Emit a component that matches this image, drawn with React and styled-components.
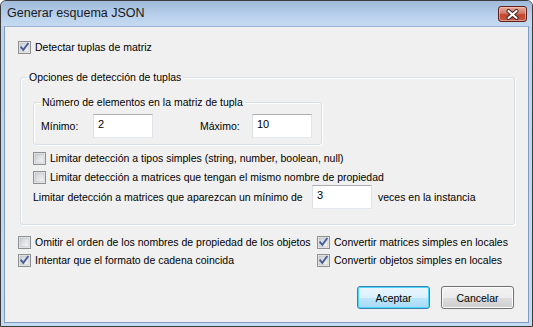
import React from "react";
import styled, { createGlobalStyle } from "styled-components";

const Global = createGlobalStyle`
  html, body { margin: 0; padding: 0; background: #ffffff; }
  body { font-family: "Liberation Sans", Arial, sans-serif; font-size: 10.5px; color: #000; }
  * { box-sizing: border-box; }
`;

const Window = styled.div`
  width: 533px;
  height: 327px;
  border: 1px solid #3c3c3c;
  border-radius: 6px 6px 0 0;
  background: linear-gradient(#a2bcdc, #bfd5ee 30px, #c3daf2);
  display: flex;
  flex-direction: column;
  overflow: hidden;
`;

const TitleBar = styled.div`
  height: 25px;
  flex: none;
  display: flex;
  align-items: center;
  justify-content: space-between;
  padding: 0 5px 2px 6px;
  background: linear-gradient(#9fb9da, #b9d1ec 60%, #c5daf1);
`;

const Title = styled.span`
  font-family: "Liberation Sans", Arial, sans-serif;
  font-size: 12.5px;
  color: #1a1a1a;
`;

const CloseButton = styled.div`
  width: 29px;
  height: 16px;
  margin-top: 3px;
  border: 1px solid #5d1f17;
  border-radius: 3px;
  background: linear-gradient(#e6a89c, #d3786a 45%, #c0452f 55%, #c85a44);
  box-shadow: inset 0 0 0 1px rgba(255, 210, 200, 0.55);
  display: flex;
  align-items: center;
  justify-content: center;
`;

const Body = styled.div`
  flex: 1;
  margin: 0 3px 3px 3px;
  border: 1px solid #7f9bbd;
  border-top-color: #9ab3d2;
  background: #f0f0f0;
  padding: 12px 13px 0 13px;
  display: flex;
  flex-direction: column;
`;

const Row = styled.div`
  display: flex;
  align-items: center;
  gap: ${(p) => p.$gap ?? 4}px;
  height: ${(p) => p.$h ?? 16}px;
  margin-top: ${(p) => p.$mt ?? 0}px;
  white-space: nowrap;
`;

const Group = styled.fieldset`
  margin: ${(p) => p.$m};
  padding: 0;
  border: 1px solid #d5dfe5;
  border-radius: 3px;
  box-shadow: inset 1px 1px 0 #ffffff, 1px 1px 0 #ffffff;
  min-width: 0;
`;

const Legend = styled.legend`
  margin-left: 6px;
  padding: 0 2px;
  height: 14px;
  line-height: 14px;
  font-size: 10.5px;
`;

const GroupInner = styled.div`
  padding: ${(p) => p.$p};
  display: flex;
  flex-direction: column;
`;

const FieldLabel = styled.span`
  width: ${(p) => p.$w}px;
  flex: none;
  margin-left: ${(p) => p.$ml ?? 0}px;
`;

const TextBox = styled.div`
  width: 60px;
  height: 24px;
  flex: none;
  background: #fff;
  border: 1px solid;
  border-color: #abadb3 #e2e3ea #e3e9ef #dbdfe6;
  padding: 2px 0 0 4px;
  line-height: 14px;
  font-size: 11px;
`;

const Columns = styled.div`
  display: grid;
  grid-template-columns: 299px auto;
  row-gap: 2px;
  margin-top: 9px;
`;

const Buttons = styled.div`
  display: flex;
  justify-content: flex-end;
  gap: 11px;
  margin-top: 18px;
  padding-right: 1px;
`;

const Button = styled.div`
  width: 73px;
  height: 23px;
  border-radius: 3px;
  display: flex;
  align-items: center;
  justify-content: center;
  font-size: 10.5px;
  border: 1px solid ${(p) => (p.$default ? "#3c7fb1" : "#707070")};
  background: ${(p) =>
    p.$default
      ? "linear-gradient(#eaf6fd, #d9f0fc 50%, #bee6fd 51%, #a7d9f5)"
      : "linear-gradient(#f2f2f2, #ebebeb 50%, #dddddd 51%, #cfcfcf)"};
  box-shadow: inset 0 0 0 1px ${(p) => (p.$default ? "#48d8fb" : "#fcfcfc")};
`;

const Box = styled.svg`
  flex: none;
  display: block;
`;

function Check({ checked }) {
  return (
    <Box width="13" height="13" viewBox="0 0 13 13">
      <defs>
        <linearGradient id="cbg" x1="0" y1="0" x2="1" y2="1">
          <stop offset="0" stopColor="#cbcfd5" />
          <stop offset="1" stopColor="#f7f7f7" />
        </linearGradient>
      </defs>
      <rect x="0.5" y="0.5" width="12" height="12" fill="#f4f4f4" stroke="#8e8f8f" />
      <rect x="2" y="2" width="9" height="9" fill="url(#cbg)" stroke="#b0b4bb" strokeWidth="0.6" />
      {checked && (
        <path
          d="M3.2 6.4 L5.3 8.9 L9.8 2.8"
          fill="none"
          stroke="#4a5f97"
          strokeWidth="1.9"
          strokeLinecap="square"
          strokeLinejoin="miter"
        />
      )}
    </Box>
  );
}

function CheckRow({ checked, children, mt }) {
  return (
    <Row $mt={mt}>
      <Check checked={checked} />
      <span>{children}</span>
    </Row>
  );
}

export default function App() {
  return (
    <>
      <Global />
      <Window>
        <TitleBar>
          <Title>Generar esquema JSON</Title>
          <CloseButton>
            <svg width="13" height="11" viewBox="0 0 13 11">
              <path d="M2.5 2 L10.5 9 M10.5 2 L2.5 9" stroke="#3a1a16" strokeWidth="4" strokeLinecap="round" />
              <path d="M2.5 2 L10.5 9 M10.5 2 L2.5 9" stroke="#ffffff" strokeWidth="2.2" strokeLinecap="round" />
            </svg>
          </CloseButton>
        </TitleBar>
        <Body>
          <CheckRow checked>Detectar tuplas de matriz</CheckRow>
          <Group $m="15px 0 0 2px">
            <Legend>Opciones de detección de tuplas</Legend>
            <GroupInner $p="11px 12px 15px 12px">
              <Group $m="0 180px 0 0">
                <Legend>Número de elementos en la matriz de tupla</Legend>
                <GroupInner $p="5px 8px 6px 7px">
                  <Row $h={24} $gap={0}>
                    <FieldLabel $w={52}>Mínimo:</FieldLabel>
                    <TextBox>2</TextBox>
                    <FieldLabel $w={52} $ml={47}>Máximo:</FieldLabel>
                    <TextBox>10</TextBox>
                  </Row>
                </GroupInner>
              </Group>
              <CheckRow mt={5}>Limitar detección a tipos simples (string, number, boolean, null)</CheckRow>
              <CheckRow mt={3}>Limitar detección a matrices que tengan el mismo nombre de propiedad</CheckRow>
              <Row $h={24} $gap={0}>
                <FieldLabel $w={279}>Limitar detección a matrices que aparezcan un mínimo de</FieldLabel>
                <TextBox>3</TextBox>
                <FieldLabel $w={120} $ml={6}>veces en la instancia</FieldLabel>
              </Row>
            </GroupInner>
          </Group>
          <Columns>
            <CheckRow>Omitir el orden de los nombres de propiedad de los objetos</CheckRow>
            <CheckRow checked>Convertir matrices simples en locales</CheckRow>
            <CheckRow checked>Intentar que el formato de cadena coincida</CheckRow>
            <CheckRow checked>Convertir objetos simples en locales</CheckRow>
          </Columns>
          <Buttons>
            <Button $default>Aceptar</Button>
            <Button>Cancelar</Button>
          </Buttons>
        </Body>
      </Window>
    </>
  );
}
